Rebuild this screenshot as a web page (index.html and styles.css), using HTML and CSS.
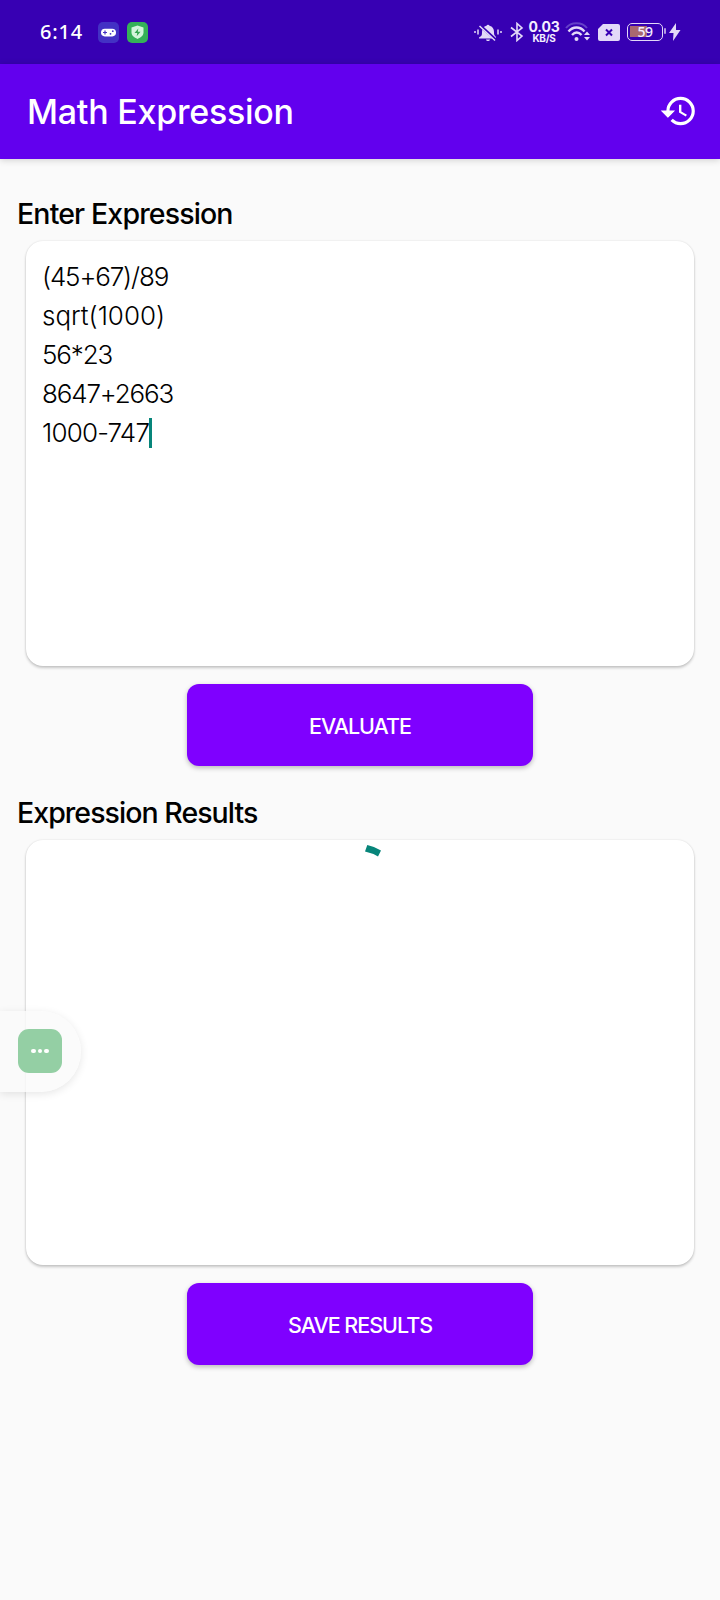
FILE: index.html
```html
<!DOCTYPE html>
<html lang="en">
<head>
<meta charset="utf-8">
<title>Math Expression</title>
<link rel="stylesheet" href="styles.css">
</head>
<body>
<header class="status-bar">
  <span class="clock">6:14</span>
  <svg class="game-icon" width="21" height="21" viewBox="0 0 21 21"><rect width="21" height="21" rx="5" fill="#4331c4"/><rect x="3" y="6.8" width="15" height="7.6" rx="3.8" fill="#fff"/><path d="M5 10.5h4M7 8.5v4" stroke="#4331c4" stroke-width="1.2"/><circle cx="14.8" cy="9.2" r=".9" fill="#4331c4"/><circle cx="12.5" cy="11.8" r=".9" fill="#4331c4"/></svg>
  <svg class="shield-icon" width="21" height="21" viewBox="0 0 21 21"><rect width="21" height="21" rx="5" fill="#35b158"/><path d="M10.5 3.500 16.500 5.500v5c0 3-2.500 4.700-6 6.500-3.500-1.800-6-3.500-6-6.500v-5z" fill="#d3f5dc"/><path d="M11.300 6.500 7.500 11h2.700l-.5 3.300L13.500 9.700h-2.700z" fill="#35a653"/></svg>
  <div class="indicators">
    <svg class="bell" width="28" height="20" viewBox="0 0 28 20" fill="#e3d9f8"><path d="M6.500 14.500c1.500-1 1.500-2.500 1.500-4.500 0-3 1.500-5.500 4.500-6.200a1.600 1.600 0 0 1 3 0c3 .7 4.500 3.200 4.500 6.200 0 2 0 3.500 2 5v1.500H5v-1zM12 17.500h4c-.4 2-3.600 2-4 0z"/><path d="M5 2.500 22 18" stroke="#3700b3" stroke-width="3"/><path d="M5.500 4 21 18.500M1 9v2M4 7.500v5M24 7.500v5M27 9v2" fill="none" stroke="#e3d9f8" stroke-width="1.500"/></svg>
    <svg class="bluetooth" width="14" height="20" viewBox="0 0 14 20" fill="none" stroke="#e3d9f8" stroke-width="1.600"><path d="M1 5.500 12 14l-5 4.500V1.500L12 6 1 14.500"/></svg>
    <div class="speed"><span class="speed-value">0.03</span><span class="speed-unit">KB/S</span></div>
    <svg class="wifi" width="25" height="20" viewBox="0 0 25 20" fill="none"><path d="M1 6C6-.5 17-.5 22 6" stroke="#6541c8" stroke-width="2"/><path d="M3.500 9.500c4.500-5.300 11.500-5.300 16 0M7 13c3-3.300 6.500-3.300 9.500 0" stroke="#e3d9f8" stroke-width="2.400"/><circle cx="11.500" cy="17" r="2" fill="#e3d9f8"/><path d="m19 13 3-3.500 3 3.500zM19 15h6l-3 3.500z" fill="#e3d9f8"/></svg>
    <svg class="sim" width="22" height="17" viewBox="0 0 22 17"><path d="M5 0h15a2 2 0 0 1 2 2v13a2 2 0 0 1-2 2H2a2 2 0 0 1-2-2V5z" fill="#e3d9f8"/><path d="m8 5.500 6 6m0-6-6 6" stroke="#3700b3" stroke-width="2"/></svg>
    <div class="battery"><span class="battery-level">59</span></div>
    <svg class="bolt" width="12" height="18" viewBox="0 0 12 18"><path d="M7 0 0 10h4.500L4 18l7.500-11H7z" fill="#e3d9f8"/></svg>
  </div>
</header>
<div class="app-bar">
  <h1 class="title">Math Expression</h1>
  <svg class="history" width="38" height="38" viewBox="0 0 24 24" fill="#fff"><path d="M13 3a9 9 0 0 0-9 9H1l3.890 3.890.070.140L9 12H6c0-3.870 3.130-7 7-7s7 3.130 7 7-3.130 7-7 7c-1.930 0-3.680-.79-4.940-2.060l-1.420 1.420A8.954 8.954 0 0 0 13 21a9 9 0 0 0 0-18zm-1 5v5l4.280 2.540.72-1.210-3.500-2.080V8H12z"/><path d="M.5 11.700h9L5 16.300z"/></svg>
</div>
<main class="content">
  <h2 class="label label-enter">Enter Expression</h2>
  <section class="card input-card">
    <div class="line line-1">(45+67)/89</div>
    <div class="line line-2">sqrt(1000)</div>
    <div class="line line-3">56*23</div>
    <div class="line line-4">8647+2663</div>
    <div class="line line-5">1000-747<span class="caret"></span></div>
  </section>
  <button class="action evaluate">EVALUATE</button>
  <h2 class="label label-results">Expression Results</h2>
  <section class="card result-card">
    <svg class="spinner" width="16" height="13" viewBox="0 0 16 13"><path d="M2.300 0Q9.500 1.500 16 5.500L13 11.500Q7 8 0 6.500z" fill="#07857a"/></svg>
  </section>
  <button class="action save">SAVE RESULTS</button>
</main>
<div class="edge-panel"><div class="edge-button"><i class="dot"></i><i class="dot"></i><i class="dot"></i></div></div>
</body>
</html>
```
FILE: styles.css
```css
* { box-sizing: border-box; }
body { margin: 0; width: 720px; height: 1600px; overflow: hidden; position: relative; background: #fafafa; color: #000; font-family: Inter, "Noto Sans", sans-serif; }
h1, h2 { margin: 0; font-weight: 500; white-space: nowrap; }
svg { display: block; flex: none; }

.status-bar { height: 64px; padding-left: 40px; display: flex; align-items: center; background: #3700b3; color: #fff; }
.clock { width: 58px; font: 500 20px/24px "Noto Sans", sans-serif; letter-spacing: .8px; }
.shield-icon { margin-left: 8px; }
.indicators { margin-left: auto; margin-right: 39px; display: flex; align-items: center; }
.bluetooth { margin-left: 8px; }
.speed { width: 30px; margin-left: 5px; display: flex; flex-direction: column; align-items: center; font-family: Inter, sans-serif; font-weight: 700; color: #f4efff; }
.speed-value { font-size: 14px; line-height: 12px; letter-spacing: -.2px; }
.speed-unit { font-size: 10px; line-height: 10px; letter-spacing: -.3px; }
.wifi { margin-left: 6px; }
.sim { margin-left: 8px; }
.battery { position: relative; width: 36px; height: 18px; margin-left: 7px; border: 1.5px solid #e3d9f8; border-radius: 5px; background: linear-gradient(#a86870, #a86870) 2px 2px / 17px 11px no-repeat; text-align: center; }
.battery::after { content: ""; position: absolute; right: -4px; top: 4px; width: 2px; height: 6px; background: #b49ae1; border-radius: 1px; }
.battery-level { display: block; font: 500 14px/15px "Noto Sans", sans-serif; letter-spacing: -.5px; color: #f4efff; }
.bolt { margin-left: 6px; }

.app-bar { position: relative; height: 95px; padding: 0 22px 2px 27px; display: flex; align-items: center; justify-content: space-between; background: #6200ee; color: #fff; box-shadow: 0 1px 7px rgba(0,0,0,.18); }
.title { padding-top: 3px; font-size: 34px; line-height: 44px; letter-spacing: -.25px; }

.content { display: flex; flex-direction: column; align-items: center; padding-top: 37px; }
.label { align-self: flex-start; margin-left: 17px; height: 45px; font-size: 28.500px; line-height: 36px; letter-spacing: -.85px; }
.card { width: 668px; height: 425px; border-radius: 17px; background: #fff; box-shadow: 0 2px 3px rgba(0,0,0,.2), 0 0 2px rgba(0,0,0,.12); }
.input-card { padding: 16px; }
.line { height: 39px; font-size: 26px; font-weight: 300; line-height: 39px; letter-spacing: -1.150px; white-space: nowrap; display: flex; align-items: center; }
.line-2 { letter-spacing: 0; }
.line-5 { letter-spacing: -.8px; }
.caret { width: 3px; height: 30px; background: #07857a; }
.action { width: 346px; height: 82px; margin-top: 18px; padding: 1px 0 0; border: 0; border-radius: 12px; background: #7f00ff; color: #fff; font: 500 21.500px/28px Inter, sans-serif; letter-spacing: -1px; white-space: nowrap; box-shadow: 0 2px 5px rgba(0,0,0,.26); }
.label-results { margin-top: 29px; letter-spacing: -.95px; }
.result-card { display: flex; justify-content: center; padding: 5px 0 0 25px; }

.edge-panel { position: absolute; left: 0; top: 1011px; width: 81px; height: 81px; padding: 18px; border-radius: 0 41px 41px 0; background: rgba(250,250,250,.8); box-shadow: 0 2px 8px rgba(0,0,0,.1); }
.edge-button { width: 44px; height: 44px; display: flex; align-items: center; justify-content: center; gap: 2px; border-radius: 11px; background: #94cfa4; }
.dot { width: 4.700px; height: 4.700px; border-radius: 50%; background: #fff; }
```
